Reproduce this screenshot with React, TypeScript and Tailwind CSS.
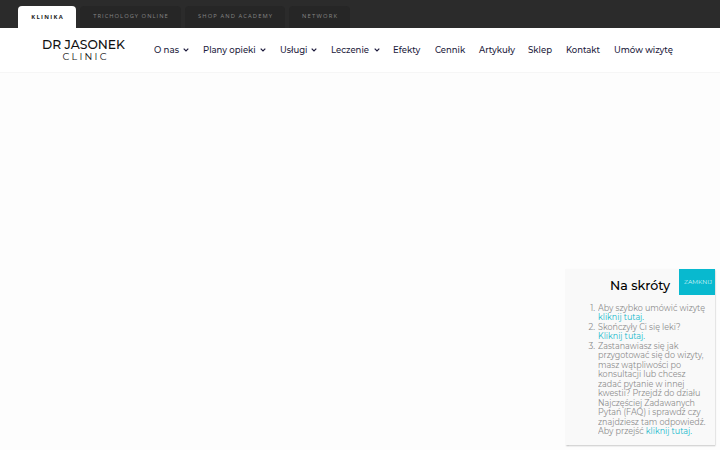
import React from "react";

const tabs = [
  { label: "TRICHOLOGY ONLINE", cls: "ml-[4px] w-[101px]", text: "w-[74.5px]" },
  { label: "SHOP AND ACADEMY", cls: "ml-[4px] w-[100px]", text: "w-[74px]" },
  { label: "NETWORK", cls: "ml-[4px] w-[61px]", text: "w-[35px]" },
];

const nav = [
  { label: "O nas", w: "w-[25px]", menu: true },
  { label: "Plany opieki", w: "w-[52.7px]", menu: true },
  { label: "Usługi", w: "w-[27.5px]", menu: true },
  { label: "Leczenie", w: "w-[38px]", menu: true },
  { label: "Efekty", w: "w-[27.2px]" },
  { label: "Cennik", w: "w-[30.2px]" },
  { label: "Artykuły", w: "w-[36px]" },
  { label: "Sklep", w: "w-[24px]" },
  { label: "Kontakt", w: "w-[34px]" },
  { label: "Umów wizytę", w: "w-[59px]" },
];

type FitProps = { children: React.ReactNode; className?: string; width?: number; tracked?: boolean };

/** Fills the width of its box, by letter spacing when tracked, otherwise by condensing the text. */
function Fit({ children, className = "", width, tracked = false }: FitProps) {
  const box = React.useRef<HTMLSpanElement>(null);
  const inner = React.useRef<HTMLSpanElement>(null);
  const [style, setStyle] = React.useState<React.CSSProperties>({});
  React.useLayoutEffect(() => {
    if (!box.current || !inner.current) return;
    const count = (inner.current.textContent || "").length;
    const target = width ?? box.current.getBoundingClientRect().width;
    const natural = inner.current.getBoundingClientRect().width;
    setStyle(tracked ? { letterSpacing: (target - natural) / (count - 1) } : { transform: `scaleX(${target / natural})` });
  }, [width, tracked]);
  return (
    <span ref={box} className={`block whitespace-nowrap ${className}`}>
      <span ref={inner} className="inline-block origin-left align-top" style={style}>{children}</span>
    </span>
  );
}

const link = "text-[#14b8cb]";
const entries = [
  { lines: [{ t: "Aby szybko umówić wizytę", w: 107 }, { t: <span className={link}>kliknij tutaj.</span>, w: 46 }] },
  { lines: [{ t: "Skończyły Ci się leki?", w: 82.5 }, { t: <span className={link}>Kliknij tutaj.</span>, w: 47 }] },
  {
    lines: [
      { t: "Zastanawiasz się jak", w: 80.5 },
      { t: "przygotować się do wizyty,", w: 105.5 },
      { t: "masz wątpliwości po", w: 83 },
      { t: "konsultacji lub chcesz", w: 87.5 },
      { t: "zadać pytanie w innej", w: 86.5 },
      { t: "kwestii? Przejdź do działu", w: 102.5 },
      { t: "Najczęściej Zadawanych", w: 97 },
      { t: "Pytań (FAQ) i sprawdź czy", w: 102.5 },
      { t: "znajdziesz tam odpowiedź.", w: 107.5 },
      { t: <>Aby przejść <span className={link}>kliknij tutaj.</span></>, w: 94 },
    ],
  },
];

export default function App() {
  return (
    <div className="relative h-[450px] w-[720px] overflow-hidden bg-[#fdfdfd] font-['Montserrat','Inter',sans-serif]">
      <div className="flex h-[28px] items-end bg-[#2b2b2b] pl-[18px] font-['Open_Sans',sans-serif] text-[5.8px]">
        <div className="flex h-[22px] w-[58px] items-center justify-center rounded-t-[4px] bg-white font-bold text-[#222]">
          <Fit tracked className="w-[31.5px]">KLINIKA</Fit>
        </div>
        {tabs.map((t) => (
          <div key={t.label} className={`flex h-[22px] items-center justify-center rounded-t-[4px] bg-[#262626] pb-px text-[#858585] ${t.cls}`}>
            <Fit tracked className={t.text}>{t.label}</Fit>
          </div>
        ))}
      </div>
      <header className="flex h-[45px] border-b border-[#f6f6f6] bg-white pl-[42px]">
        <div className="flex w-[83px] flex-col items-center pt-[9px] text-[#111]">
          <Fit className="w-[83px] text-[13px] font-medium leading-[15px]">DR JASONEK</Fit>
          <Fit tracked className="ml-[2px] w-[44px] text-[9.6px] leading-[10px]">CLINIC</Fit>
        </div>
        <nav className="ml-[28.5px] flex h-[44px] items-center gap-[13.9px] text-[8.8px] font-medium text-[#1c1a3c]">
          {nav.map((n) => (
            <div key={n.label} className="flex items-center">
              <Fit className={n.w}>{n.label}</Fit>
              {n.menu && (
                <svg viewBox="0 0 6 4" className="ml-[4.3px] h-[4px] w-[6px]" fill="none" stroke="currentColor" strokeWidth="1.2">
                  <path d="M.7.7 3 3 5.3.7" />
                </svg>
              )}
            </div>
          ))}
        </nav>
      </header>
      <aside className="absolute left-[565px] top-[269px] h-[176px] w-[150px] bg-[#f9f9f9] shadow-[0.5px_1px_1.5px_rgba(0,0,0,0.25)]">
        <button className="absolute right-0 top-0 flex h-[26px] w-[36px] items-center justify-center bg-[#08b9cf] text-[5.8px] text-[#d3f4f8]">
          <Fit className="w-[28px]">ZAMKNIJ</Fit>
        </button>
        <h2 className="pl-[45px] pt-[8px] text-[12.7px] font-medium leading-[18px] text-black">
          <Fit className="w-[60px]">Na skróty</Fit>
        </h2>
        <ol className="mt-[8.5px] text-[8.4px] leading-[9.5px] text-[#8c8c8c]">
          {entries.map((e, i) => (
            <li key={i} className="flex">
              <span className="mr-[3px] w-[30px] text-right">{i + 1}.</span>
              <div>
                {e.lines.map((l, j) => (
                  <Fit key={j} width={l.w}>{l.t}</Fit>
                ))}
              </div>
            </li>
          ))}
        </ol>
      </aside>
    </div>
  );
}
